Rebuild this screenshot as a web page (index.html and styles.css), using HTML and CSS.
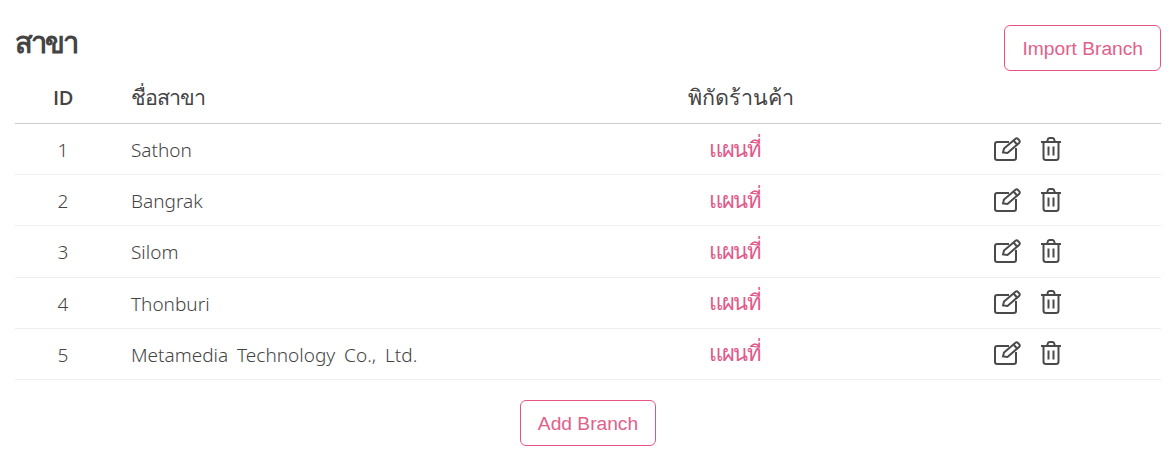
FILE: index.html
```html
<!DOCTYPE html>
<html lang="th">
<head>
    <meta charset="UTF-8">
    <meta name="viewport" content="width=device-width, initial-scale=1.0">
    <title>สาขา</title>
    <link rel="stylesheet" href="styles.css">
</head>
<body>
    <svg class="icon-defs" width="0" height="0">
        <symbol id="icon-edit" viewBox="0 0 28 24">
            <path d="M15 5H3.200C2 5 1 6 1 7.200V20.800C1 22 2 23 3.200 23H19.800C21 23 22 22 22 20.800V11" />
            <path d="M9 15.500L10 11.500L21.500 1.800C22.300 1.100 23.300 1.200 24 2L25.300 3.400C26 4.200 25.900 5.200 25.100 5.900L13.500 16L9 15.500Z" />
            <path d="M19.500 3.500L23.500 8" />
        </symbol>
        <symbol id="icon-trash" viewBox="0 0 20 24">
            <path d="M0 5H20" />
            <path d="M6 5L7 2C7.300 1.300 7.800 1 8.500 1H11.500C12.200 1 12.700 1.300 13 2L14 5" />
            <path d="M2.500 5V20.500C2.500 22 3.500 23 5 23H15C16.500 23 17.500 22 17.500 20.500V5" />
            <path d="M7.500 9.500V18.500M12.500 9.500V18.500" />
        </symbol>
    </svg>

    <div class="page">
        <div class="top">
            <h1>สาขา</h1>
            <button class="btn">Import Branch</button>
        </div>

        <table class="branches">
            <thead>
                <tr>
                    <th class="col-id">ID</th>
                    <th class="col-name">ชื่อสาขา</th>
                    <th class="col-map">พิกัดร้านค้า</th>
                    <th class="col-actions"></th>
                </tr>
            </thead>
            <tbody>
                <tr>
                    <td class="col-id">1</td>
                    <td class="col-name">Sathon</td>
                    <td class="col-map"><a href="#">แผนที่</a></td>
                    <td class="col-actions"><svg class="icon edit"><use href="#icon-edit"/></svg><svg class="icon trash"><use href="#icon-trash"/></svg></td>
                </tr>
                <tr>
                    <td class="col-id">2</td>
                    <td class="col-name">Bangrak</td>
                    <td class="col-map"><a href="#">แผนที่</a></td>
                    <td class="col-actions"><svg class="icon edit"><use href="#icon-edit"/></svg><svg class="icon trash"><use href="#icon-trash"/></svg></td>
                </tr>
                <tr>
                    <td class="col-id">3</td>
                    <td class="col-name">Silom</td>
                    <td class="col-map"><a href="#">แผนที่</a></td>
                    <td class="col-actions"><svg class="icon edit"><use href="#icon-edit"/></svg><svg class="icon trash"><use href="#icon-trash"/></svg></td>
                </tr>
                <tr>
                    <td class="col-id">4</td>
                    <td class="col-name">Thonburi</td>
                    <td class="col-map"><a href="#">แผนที่</a></td>
                    <td class="col-actions"><svg class="icon edit"><use href="#icon-edit"/></svg><svg class="icon trash"><use href="#icon-trash"/></svg></td>
                </tr>
                <tr>
                    <td class="col-id">5</td>
                    <td class="col-name">Metamedia Technology Co., Ltd.</td>
                    <td class="col-map"><a href="#">แผนที่</a></td>
                    <td class="col-actions"><svg class="icon edit"><use href="#icon-edit"/></svg><svg class="icon trash"><use href="#icon-trash"/></svg></td>
                </tr>
            </tbody>
        </table>

        <div class="bottom">
            <button class="btn">Add Branch</button>
        </div>
    </div>
</body>
</html>
```

FILE: styles.css
```css
* {
    box-sizing: border-box;
}
body {
    margin: 0;
    background: #fff;
    color: #444;
    font-family: "Noto Sans", "Noto Sans CJK SC", sans-serif;
}
.icon-defs {
    display: block;
}
.page {
    padding: 25px 11px 0 15px;
}
.top {
    display: flex;
    justify-content: space-between;
    height: 46px;
}
h1 {
    margin: 0;
    font-size: 29px;
    font-weight: 600;
    letter-spacing: -2px;
    line-height: 33px;
}
.btn {
    background: #fff;
    border: 1px solid #e75480;
    border-radius: 6px;
    color: #e2608a;
    font-family: "Liberation Sans", Arial, sans-serif;
    font-size: 19.200px;
    height: 46.400px;
    padding: 1px 17px 0;
}
.branches {
    width: 100%;
    border-collapse: separate;
    border-spacing: 0;
    table-layout: fixed;
}
.branches th {
    height: 53px;
    padding: 0;
    border-bottom: 1px solid #ccc;
    font-size: 21.500px;
    font-weight: 500;
}
.branches th.col-id {
    font-family: "Open Sans", sans-serif;
    font-size: 20px;
    font-weight: 600;
    letter-spacing: -0.500px;
}
.branches td {
    height: 51.200px;
    padding: 2px 0 0;
    border-bottom: 1px solid #eee;
    font-size: 19px;
    font-weight: 300;
}
.col-id {
    width: 96px;
    text-align: center;
}
.branches .col-name {
    width: 369px;
    padding-left: 20px;
    text-align: left;
    white-space: nowrap;
    word-spacing: 4px;
}
.branches th.col-name {
    letter-spacing: -1px;
}
.col-map {
    text-align: center;
}
.branches th.col-map {
    padding-left: 12px;
}
.branches td.col-map {
    padding-top: 0;
}
.branches td.col-map a {
    color: #e2588a;
    font-size: 22px;
    font-weight: 500;
    letter-spacing: -1.400px;
    text-decoration: none;
}
.branches .col-actions {
    width: 171px;
    padding-left: 4px;
}
.icon {
    fill: none;
    stroke: #4a4a4a;
    stroke-width: 2;
    vertical-align: middle;
    margin-bottom: 4px;
}
.edit {
    width: 28px;
    height: 24px;
    margin-right: 19px;
}
.trash {
    width: 20px;
    height: 24px;
}
.bottom {
    display: flex;
    justify-content: center;
    padding-top: 20px;
}
```
